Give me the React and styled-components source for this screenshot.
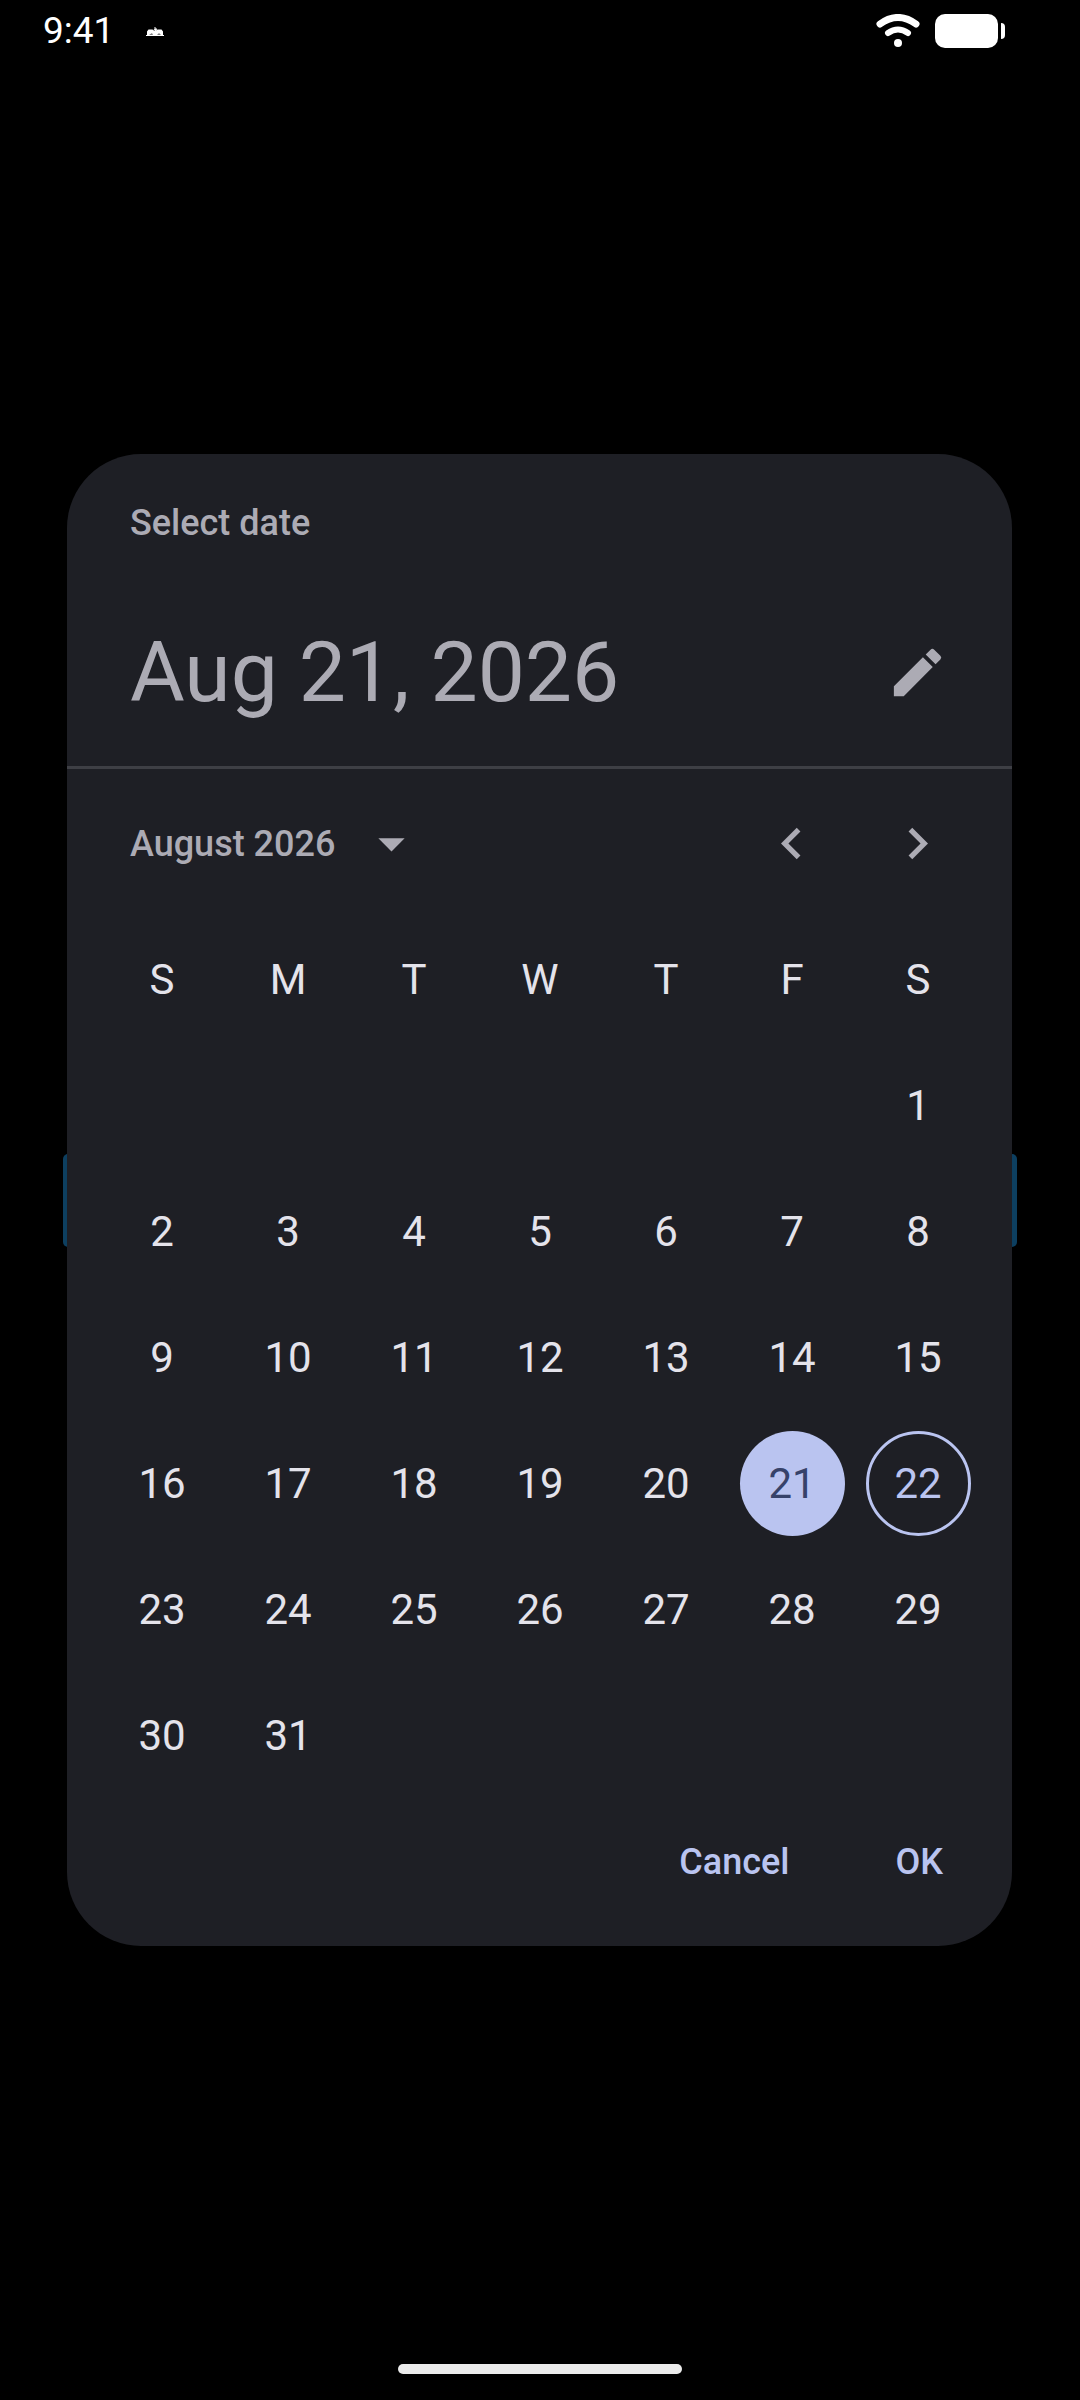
import { useState } from "react";
import styled, { createGlobalStyle, css } from "styled-components";

const WEEKDAYS = [
  ["S", "Sunday"],
  ["M", "Monday"],
  ["T", "Tuesday"],
  ["W", "Wednesday"],
  ["T", "Thursday"],
  ["F", "Friday"],
  ["S", "Saturday"],
];
const FIRST_DAY = 6;
const DAY_COUNT = 31;
const TODAY = 22;

const weeks = Array.from({ length: 6 }, (_, week) =>
  Array.from({ length: 7 }, (_, col) => {
    const day = week * 7 + col - FIRST_DAY + 1;
    return day > 0 && day <= DAY_COUNT ? day : null;
  })
);

function Icon({ d }) {
  return (
    <IconSvg viewBox="0 0 24 24" aria-hidden="true">
      <path d={d} />
    </IconSvg>
  );
}

function StatusBar() {
  return (
    <Status>
      <Clock>9:41</Clock>
      <svg width="18" height="9" viewBox="0 0 18 9" fill="#fff" aria-hidden="true">
        <path d="M0 8h1V4.5l1.5-2h4l2 1.5V3l-1-1h1V0h1v1.5H11v1L9.500 4l2-1.500h4l1.500 2V8h1v1H0z" />
        <path d="M3 7.5h4l-1-1zM11 7.5h4l-2-1z" fill="#000" />
      </svg>
      <StatusIcons>
        <svg width="44" height="34" viewBox="0 0 44 34" fill="none" stroke="#fff" strokeLinecap="round" aria-hidden="true">
          <path d="M4 10Q22-3 40 10" strokeWidth="7" />
          <path d="M12 19Q22 12 32 19" strokeWidth="6" />
          <circle cx="22" cy="29" r="4" fill="#fff" stroke="none" />
        </svg>
        <svg width="70" height="34" viewBox="0 0 70 34" fill="#fff" aria-hidden="true">
          <rect width="63" height="34" rx="10" />
          <path d="M66 9q4 0 4 4v8q0 4-4 4z" />
        </svg>
      </StatusIcons>
    </Status>
  );
}

function Calendar({ selected, onSelect }) {
  return (
    <CalendarTable aria-label="August 2026">
      <thead>
        <tr>
          {WEEKDAYS.map(([letter, name]) => (
            <th key={name} scope="col" abbr={name}>
              {letter}
            </th>
          ))}
        </tr>
      </thead>
      <tbody>
        {weeks.map((week, i) => (
          <tr key={i}>
            {week.map((day, col) => (
              <td key={col}>
                {day && (
                  <DayButton
                    type="button"
                    $selected={day === selected}
                    $today={day === TODAY}
                    aria-pressed={day === selected}
                    onClick={() => onSelect(day)}
                  >
                    {day}
                  </DayButton>
                )}
              </td>
            ))}
          </tr>
        ))}
      </tbody>
    </CalendarTable>
  );
}

function App() {
  const [selected, setSelected] = useState(21);

  return (
    <Page>
      <GlobalStyle />
      <StatusBar />
      <Stage>
        <Backdrop />
        <Dialog role="dialog" aria-labelledby="picker-label">
          <Header>
            <Label id="picker-label">Select date</Label>
            <TitleRow>
              <Title>Aug {selected}, 2026</Title>
              <IconButton type="button" aria-label="Edit date">
                <Icon d="M3 17.25V21h3.75L17.81 9.94l-3.75-3.75L3 17.25zM20.71 7.04a1 1 0 0 0 0-1.41l-2.34-2.34a1 1 0 0 0-1.41 0l-1.83 1.83 3.75 3.75 1.83-1.83z" />
              </IconButton>
            </TitleRow>
          </Header>
          <MonthBar>
            <MonthButton type="button">
              August 2026
              <Icon d="M7 10l5 5 5-5z" />
            </MonthButton>
            <MonthNav>
              <IconButton type="button" aria-label="Previous month">
                <Icon d="M15.41 7.41L14 6l-6 6 6 6 1.41-1.41L10.83 12z" />
              </IconButton>
              <IconButton type="button" aria-label="Next month">
                <Icon d="M10 6L8.59 7.41 13.17 12l-4.58 4.59L10 18l6-6z" />
              </IconButton>
            </MonthNav>
          </MonthBar>
          <Calendar selected={selected} onSelect={setSelected} />
          <Actions>
            <TextButton type="button">Cancel</TextButton>
            <TextButton type="button">OK</TextButton>
          </Actions>
        </Dialog>
      </Stage>
      <HomeBar />
    </Page>
  );
}

export default App;

const GlobalStyle = createGlobalStyle`
  * {
    box-sizing: border-box;
  }

  body {
    margin: 0;
    background: #000;
    font-family: Roboto, sans-serif;
  }

  button {
    margin: 0;
    padding: 0;
    border: 0;
    background: none;
    color: inherit;
    font: inherit;
    cursor: pointer;
  }

  svg {
    display: block;
    flex-shrink: 0;
  }
`;

const Page = styled.main`
  min-height: 100vh;
  display: grid;
  grid-template-rows: 1fr auto 1fr;
`;

const Status = styled.header`
  align-self: start;
  display: flex;
  align-items: center;
  height: 62px;
  padding: 0 75px 0 43px;
`;

const Clock = styled.span`
  margin-right: 32px;
  color: #fff;
  font-size: 37px;
  line-height: 44px;
`;

const StatusIcons = styled.div`
  display: flex;
  align-items: center;
  gap: 15px;
  margin-left: auto;
`;

const Stage = styled.div`
  position: relative;
  padding: 0 68px 0 67px;
`;

/* the page's button, peeking out from behind the dialog */
const Backdrop = styled.div`
  position: absolute;
  top: 700px;
  left: 63px;
  right: 63px;
  height: 93px;
  border-radius: 5px;
  background: #0d3f60;
`;

const Dialog = styled.section`
  position: relative;
  max-width: 945px;
  margin: 0 auto;
  padding-bottom: 22px;
  border-radius: 74px;
  background: #1e1f25;
  color: #acabb4;
`;

const Header = styled.div`
  padding: 43px 32px 31px 63px;
  border-bottom: 3px solid #3e3f45;
`;

const Label = styled.div`
  font-size: 36px;
  font-weight: 500;
  line-height: 52px;
`;

const TitleRow = styled.div`
  display: flex;
  align-items: center;
  justify-content: space-between;
  margin-top: 60px;
`;

const Title = styled.h1`
  margin: 0;
  font-size: 84px;
  font-weight: 400;
  line-height: 105px;
`;

const IconSvg = styled.svg`
  width: 63px;
  height: 63px;
  fill: currentColor;
`;

const IconButton = styled.button`
  display: grid;
  place-items: center;
  width: 126px;
  height: 126px;
  border-radius: 50%;
`;

const MonthBar = styled.div`
  display: flex;
  align-items: center;
  justify-content: space-between;
  height: 147px;
  padding: 2px 32px 0 63px;
`;

const MonthButton = styled.button`
  display: flex;
  align-items: center;
  gap: 25px;
  font-size: 36px;
  font-weight: 500;
  line-height: 52px;
`;

const MonthNav = styled.div`
  display: flex;
`;

const CalendarTable = styled.table`
  width: calc(100% - 63px);
  margin: 0 31px 0 32px;
  border-collapse: collapse;
  table-layout: fixed;
  color: #e4e3eb;
  font-size: 42px;
  line-height: 63px;

  th,
  td {
    height: 126px;
    padding: 0;
    font-weight: 400;
    text-align: center;
  }
`;

const DayButton = styled.button`
  display: grid;
  place-items: center;
  width: 105px;
  height: 105px;
  margin: 0 auto;
  border-radius: 50%;

  ${({ $today }) =>
    $today &&
    css`
      border: 3px solid #bac4f0;
      color: #bac4f0;
    `}

  ${({ $selected }) =>
    $selected &&
    css`
      background: #bac4f0;
      color: #374269;
    `}
`;

const Actions = styled.div`
  display: flex;
  align-items: center;
  justify-content: flex-end;
  gap: 42px;
  height: 126px;
  padding: 2px 37px 0 0;
`;

const TextButton = styled.button`
  height: 105px;
  padding: 0 32px;
  color: #bac4f0;
  font-size: 36px;
  font-weight: 500;
  line-height: 52px;
`;

const HomeBar = styled.div`
  align-self: end;
  justify-self: center;
  width: 284px;
  height: 10px;
  margin-bottom: 26px;
  border-radius: 5px;
  background: #ebebeb;
`;
